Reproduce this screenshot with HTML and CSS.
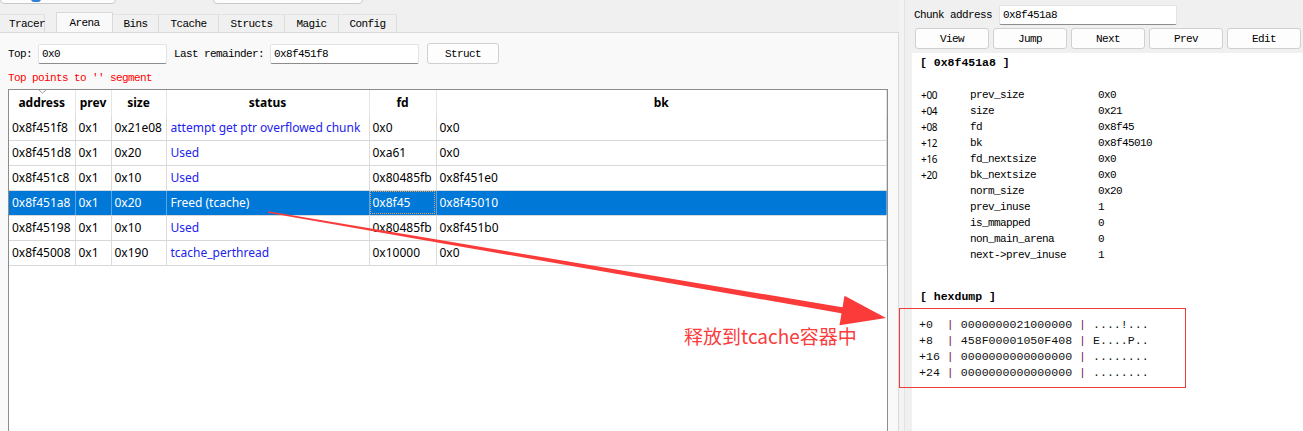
FILE: index.html
```html
<!DOCTYPE html>
<html>
<head>
<meta charset="utf-8">
<link rel="stylesheet" href="styles.css">
</head>
<body>
<div class="app">
  <div class="left">
    <div class="stubs">
      <div class="stub stub1"><span class="stub-icon"></span></div>
      <div class="stub stub2"></div>
    </div>
    <div class="tabs">
      <div class="tab tab-tracer">Tracer</div>
      <div class="tab tab-arena active">Arena</div>
      <div class="tab tab-bins">Bins</div>
      <div class="tab tab-tcache">Tcache</div>
      <div class="tab tab-structs">Structs</div>
      <div class="tab tab-magic">Magic</div>
      <div class="tab tab-config">Config</div>
    </div>
    <div class="pane">
      <div class="form-row">
        <span class="lbl">Top:</span>
        <div class="input input-top">0x0</div>
        <span class="lbl lbl-last">Last remainder:</span>
        <div class="input input-last">0x8f451f8</div>
        <div class="btn btn-struct">Struct</div>
      </div>
      <div class="warn">Top points to '' segment</div>
      <div class="table-wrap">
        <table class="chunks">
          <colgroup>
            <col class="c-addr"><col class="c-prev"><col class="c-size"><col class="c-status"><col class="c-fd"><col>
          </colgroup>
          <thead>
            <tr>
              <th class="sorted"><span class="caret"><svg width="9" height="5" viewBox="0 0 9 5"><path d="M0.5 0.5 L4.5 4.2 L8.5 0.5" fill="none" stroke="#9a9a9a" stroke-width="1"/></svg></span>address</th>
              <th>prev</th><th>size</th><th>status</th><th>fd</th><th>bk</th>
            </tr>
          </thead>
          <tbody>
            <tr><td>0x8f451f8</td><td>0x1</td><td>0x21e08</td><td class="st">attempt get ptr overflowed chunk</td><td>0x0</td><td>0x0</td></tr>
            <tr><td>0x8f451d8</td><td>0x1</td><td>0x20</td><td class="st">Used</td><td>0xa61</td><td>0x0</td></tr>
            <tr><td>0x8f451c8</td><td>0x1</td><td>0x10</td><td class="st">Used</td><td>0x80485fb</td><td>0x8f451e0</td></tr>
            <tr class="sel"><td>0x8f451a8</td><td>0x1</td><td>0x20</td><td class="st">Freed (tcache)</td><td class="focus">0x8f45</td><td>0x8f45010</td></tr>
            <tr><td>0x8f45198</td><td>0x1</td><td>0x10</td><td class="st">Used</td><td>0x80485fb</td><td>0x8f451b0</td></tr>
            <tr><td>0x8f45008</td><td>0x1</td><td>0x190</td><td class="st">tcache_perthread</td><td>0x10000</td><td>0x0</td></tr>
          </tbody>
        </table>
      </div>
    </div>
  </div>
  <div class="splitter"></div>
  <div class="right">
    <div class="addr-row">
      <span class="lbl">Chunk address</span>
      <div class="input input-chunk">0x8f451a8</div>
    </div>
    <div class="btn-row">
      <div class="btn">View</div>
      <div class="btn">Jump</div>
      <div class="btn">Next</div>
      <div class="btn">Prev</div>
      <div class="btn">Edit</div>
    </div>
    <div class="info">
      <div class="head">[ 0x8f451a8 ]</div>
      <div class="fields">
        <span class="off">+00</span><span>prev_size</span><span>0x0</span>
        <span class="off">+04</span><span>size</span><span>0x21</span>
        <span class="off">+08</span><span>fd</span><span>0x8f45</span>
        <span class="off">+12</span><span>bk</span><span>0x8f45010</span>
        <span class="off">+16</span><span>fd_nextsize</span><span>0x0</span>
        <span class="off">+20</span><span>bk_nextsize</span><span>0x0</span>
        <span class="off"></span><span>norm_size</span><span>0x20</span>
        <span class="off"></span><span>prev_inuse</span><span>1</span>
        <span class="off"></span><span>is_mmapped</span><span>0</span>
        <span class="off"></span><span>non_main_arena</span><span>0</span>
        <span class="off"></span><span>next-&gt;prev_inuse</span><span>1</span>
      </div>
      <div class="head head-hex">[ hexdump ]</div>
      <div class="hex">
        <div class="hex-line">+0  <span class="pipe">|</span> 0000000021000000 <span class="pipe">|</span> ....!...</div>
        <div class="hex-line">+8  <span class="pipe">|</span> 458F00001050F408 <span class="pipe">|</span> E....P..</div>
        <div class="hex-line">+16 <span class="pipe">|</span> 0000000000000000 <span class="pipe">|</span> ........</div>
        <div class="hex-line">+24 <span class="pipe">|</span> 0000000000000000 <span class="pipe">|</span> ........</div>
      </div>
    </div>
  </div>

  <svg class="arrow" width="1303" height="431" viewBox="0 0 1303 431">
    <polygon points="268.1,211.3 846.6,308 845.4,314 267.9,212.7" fill="#fb3a3a"/>
    <polygon points="886,318 844.5,295.7 839.5,325.3" fill="#fb3a3a"/>
  </svg>
  <div class="note">释放到tcache容器中</div>
  <div class="redbox"></div>
</div>
</body>
</html>
```

FILE: styles.css
```css
* { box-sizing: border-box; }

body {
  margin: 0;
  background: #f0f0f0;
  font-family: "Liberation Mono", "DejaVu Sans Mono", monospace;
  font-size: 11px;
  letter-spacing: -0.6px;
  color: #000;
  overflow: hidden;
}

.app {
  position: relative;
  display: flex;
  width: 1303px;
  height: 431px;
  overflow: hidden;
}

/* ---------- left side ---------- */
.left {
  width: 899px;
  display: flex;
  flex-direction: column;
}

.stubs {
  height: 4px;
  display: flex;
  overflow: hidden;
}

.stub {
  height: 22px;
  margin-top: -18px;
  border: 1px solid #c9c9c9;
  border-radius: 4px;
  background: #fdfdfd;
  display: flex;
  align-items: flex-end;
}

.stub1 { width: 116px; padding-left: 30px; padding-bottom: 1px; }
.stub2 { width: 150px; margin-left: 97px; }

.stub-icon {
  width: 10px;
  height: 3px;
  background: #2f7fd8;
  border-radius: 0 0 3px 3px;
}

.tabs {
  height: 28px;
  padding-top: 8px;
  display: flex;
  align-items: flex-end;
}

.tab {
  height: 18px;
  background: #f0f0f0;
  border-top: 1px solid #e2e2e2;
  border-right: 1px solid #dcdcdc;
  display: flex;
  align-items: center;
  justify-content: center;
  padding-top: 1px;
}

.tab-tracer { width: 45px; justify-content: flex-start; padding-left: 9px; }
.tab-arena { width: 57px; margin-left: 11px; border-left: 1px solid #dcdcdc; }
.tab-bins { width: 46px; }
.tab-tcache { width: 60px; }
.tab-structs { width: 66px; }
.tab-magic { width: 54px; }
.tab-config { width: 58px; }

.tab.active {
  height: 21px;
  background: #f9f9f9;
  border-color: #d9d9d9;
  padding-top: 0;
  margin-bottom: -1px;
}

.pane {
  flex: 1;
  background: #f9f9f9;
  border-top: 1px solid #d9d9d9;
  border-right: 1px solid #d9d9d9;
  padding: 11px 10px 0 8px;
  display: flex;
  flex-direction: column;
  min-height: 0;
}

.form-row {
  height: 20px;
  display: flex;
  align-items: center;
}

.lbl { white-space: pre; }

.input {
  height: 20px;
  background: #fff;
  border: 1px solid #e3e3e3;
  border-bottom-color: #8d8d8d;
  border-radius: 2px;
  padding-left: 3px;
  display: flex;
  align-items: center;
}

.input-top { width: 129px; margin-left: 6px; }
.lbl-last { margin-left: 7px; }
.input-last { width: 149px; margin-left: 6px; }

.btn {
  height: 21px;
  background: #fdfdfd;
  border: 1px solid #d0d0d0;
  border-radius: 3px;
  display: flex;
  align-items: center;
  justify-content: center;
}

.btn-struct { width: 72px; margin-left: 8px; margin-top: -1px; }

.warn {
  color: #ff0000;
  line-height: 12px;
  margin-top: 8px;
}

.table-wrap {
  flex: 1;
  margin-top: 5px;
  background: #fff;
  border: 1px solid #8c8c8c;
  border-bottom: none;
  min-height: 0;
}

.chunks {
  width: 100%;
  table-layout: fixed;
  border-collapse: collapse;
  font-family: "Noto Sans", "Liberation Sans", sans-serif;
  font-size: 12px;
  letter-spacing: 0;
}

.c-addr { width: 66px; }
.c-prev { width: 36px; }
.c-size { width: 55px; }
.c-status { width: 203px; }
.c-fd { width: 67px; }

.chunks th {
  height: 25px;
  font-weight: bold;
  text-align: center;
  border-right: 1px solid #e5e5e5;
  padding: 0;
  white-space: nowrap;
}

.chunks th.sorted { position: relative; }

.caret {
  position: absolute;
  left: 29px;
  top: -1px;
  line-height: 0;
}

.chunks td {
  height: 25px;
  padding: 0 0 0 3px;
  border-right: 1px solid #dcdcdc;
  border-bottom: 1px solid #d8d8d8;
  white-space: nowrap;
  overflow: hidden;
}

.chunks td.st { color: #2222ee; padding-left: 4px; }

.chunks tr.sel td {
  background: #0078d7;
  color: #fff;
  border-right-color: #5aa6e6;
}

.chunks tr.sel td.focus {
  outline: 1px dotted #f0a050;
  outline-offset: -2px;
}

/* ---------- splitter ---------- */
.splitter {
  width: 6px;
  border-right: 1px solid #e3e3e3;
  background: #f3f3f3;
}

/* ---------- right side ---------- */
.right {
  flex: 1;
  display: flex;
  flex-direction: column;
  padding: 5px 0 0 9px;
  min-width: 0;
}

.addr-row {
  height: 20px;
  display: flex;
  align-items: center;
}

.input-chunk { width: 178px; margin-left: 7px; }

.btn-row {
  display: flex;
  gap: 4px;
  margin-top: 3px;
  padding-left: 1px;
}

.btn-row .btn { width: 74px; }

.info {
  flex: 1;
  margin-top: 4px;
  margin-left: -2px;
  background: #fff;
  padding: 3px 0 0 8px;
}

.head {
  font-weight: bold;
  font-size: 11.5px;
  letter-spacing: 0;
  line-height: 14px;
}

.fields {
  margin-top: 17px;
  display: grid;
  grid-template-columns: 49px 128px auto;
  line-height: 16px;
  padding-left: 1px;
}

.off {
  font-family: "Noto Sans", "Liberation Sans", sans-serif;
  font-size: 10px;
  letter-spacing: -0.3px;
}

.head-hex { margin-top: 27px; }

.hex {
  margin-top: 13px;
  margin-left: -1px;
  font-size: 11.6px;
  letter-spacing: 0;
  line-height: 16px;
  color: #111;
}

.hex-line { white-space: pre; }

.pipe { color: #7a1a55; }

/* ---------- annotations ---------- */
.arrow {
  position: absolute;
  left: 0;
  top: 0;
  pointer-events: none;
}

.note {
  position: absolute;
  left: 684px;
  top: 323px;
  font-family: "Noto Sans CJK SC", "Noto Sans", sans-serif;
  font-size: 19px;
  line-height: 26px;
  letter-spacing: 0;
  color: #fa3c3c;
}

.redbox {
  position: absolute;
  left: 899px;
  top: 308px;
  width: 287px;
  height: 80px;
  border: 1.5px solid #ee3b3b;
}
```
